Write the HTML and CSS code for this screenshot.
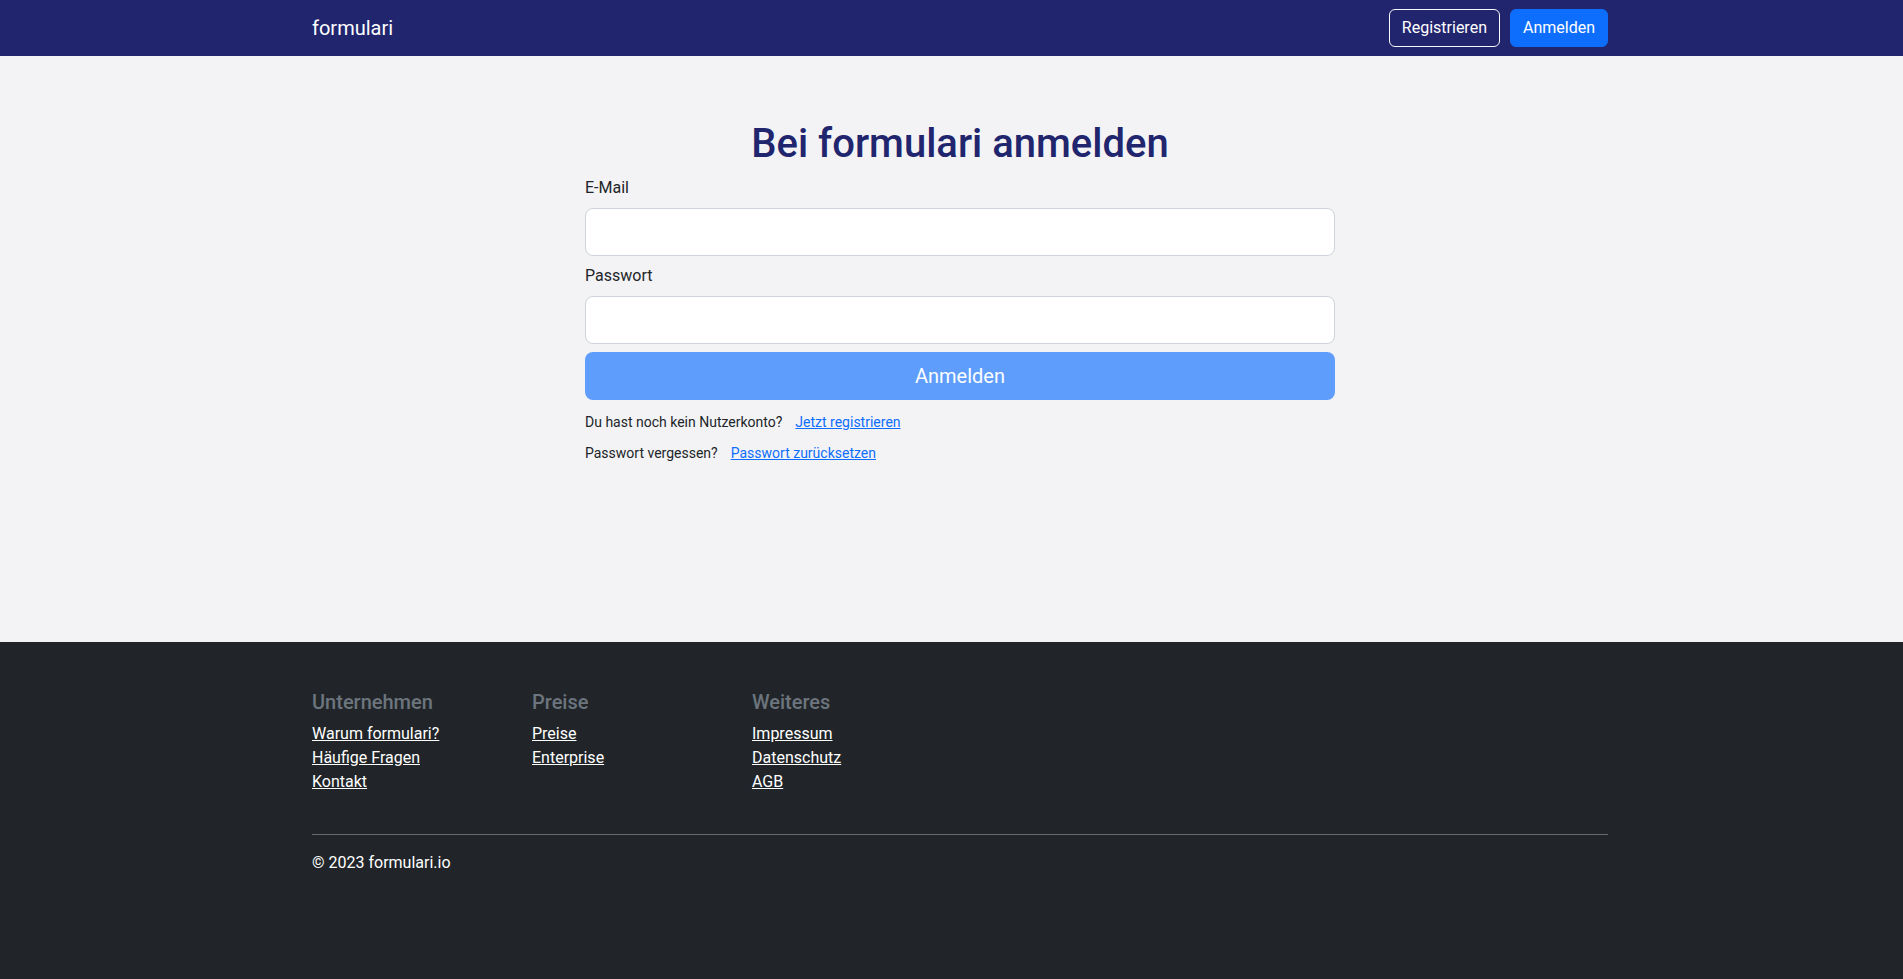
FILE: index.html
```html
<!DOCTYPE html>
<html lang="de">
<head>
<meta charset="utf-8">
<title>Bei formulari anmelden</title>
<link rel="stylesheet" href="styles.css">
</head>
<body>
<div class="page">
  <header class="navbar">
    <div class="container nav-inner">
      <a class="brand" href="#">formulari</a>
      <div class="nav-actions">
        <a class="btn btn-outline" href="#">Registrieren</a>
        <a class="btn btn-primary" href="#">Anmelden</a>
      </div>
    </div>
  </header>

  <main class="main">
    <div class="container">
      <div class="login">
        <h1 class="login-title">Bei formulari anmelden</h1>
        <form class="login-form">
          <label class="form-label" for="email">E-Mail</label>
          <input class="form-input" id="email" type="email">
          <label class="form-label" for="password">Passwort</label>
          <input class="form-input" id="password" type="password">
          <button class="submit-btn" type="button">Anmelden</button>
          <div class="hint"><span>Du hast noch kein Nutzerkonto?</span><a href="#">Jetzt registrieren</a></div>
          <div class="hint"><span>Passwort vergessen?</span><a href="#">Passwort zurücksetzen</a></div>
        </form>
      </div>
    </div>
  </main>

  <footer class="footer">
    <div class="container">
      <div class="footer-cols">
        <div class="footer-col">
          <h5 class="footer-heading">Unternehmen</h5>
          <ul class="footer-links">
            <li><a href="#">Warum formulari?</a></li>
            <li><a href="#">Häufige Fragen</a></li>
            <li><a href="#">Kontakt</a></li>
          </ul>
        </div>
        <div class="footer-col">
          <h5 class="footer-heading">Preise</h5>
          <ul class="footer-links">
            <li><a href="#">Preise</a></li>
            <li><a href="#">Enterprise</a></li>
          </ul>
        </div>
        <div class="footer-col">
          <h5 class="footer-heading">Weiteres</h5>
          <ul class="footer-links">
            <li><a href="#">Impressum</a></li>
            <li><a href="#">Datenschutz</a></li>
            <li><a href="#">AGB</a></li>
          </ul>
        </div>
      </div>
      <hr class="footer-rule">
      <p class="copyright">© 2023 formulari.io</p>
    </div>
  </footer>
</div>
</body>
</html>
```

FILE: styles.css
```css
* {
  box-sizing: border-box;
}

html, body {
  margin: 0;
  padding: 0;
}

body {
  font-family: Roboto, "Liberation Sans", Arial, sans-serif;
  font-size: 16px;
  line-height: 1.5;
  color: #212529;
  background: #212529;
}

.page {
  min-height: 100vh;
  display: flex;
  flex-direction: column;
}

.container {
  width: 100%;
  max-width: 1320px;
  padding: 0 12px;
  margin: 0 auto;
}

/* Navbar */
.navbar {
  background: #21256e;
  height: 56px;
  padding-left: 17px;
  display: flex;
  align-items: center;
}

.nav-inner {
  display: flex;
  justify-content: space-between;
  align-items: center;
}

.brand {
  color: #ffffff;
  text-decoration: none;
  font-size: 20px;
  line-height: 30px;
}

.nav-actions {
  display: flex;
  gap: 10px;
}

.btn {
  display: inline-block;
  padding: 6px 12px;
  font-size: 16px;
  line-height: 24px;
  border: 1px solid transparent;
  border-radius: 6px;
  text-decoration: none;
  color: #ffffff;
}

.btn-outline {
  border-color: #f8f9fa;
}

.btn-primary {
  background: #0d6efd;
  border-color: #0d6efd;
}

/* Main */
.main {
  background: #f3f3f5;
  padding-left: 17px;
  padding-top: 64px;
  height: 586px;
  flex-shrink: 0;
}

.login {
  width: 750px;
  margin: 0 auto;
}

.login-title {
  margin: 0 0 8px;
  font-size: 40px;
  line-height: 48px;
  font-weight: 500;
  color: #21256e;
  text-align: center;
}

.login-form {
  margin: 0;
}

.form-label {
  display: block;
  font-size: 16px;
  line-height: 24px;
  margin-bottom: 8px;
  color: #212529;
}

.form-input {
  display: block;
  width: 100%;
  height: 48px;
  margin: 0 0 8px;
  padding: 8px 16px;
  font-family: inherit;
  font-size: 20px;
  background: #ffffff;
  border: 1px solid #ced4da;
  border-radius: 8px;
}

.submit-btn {
  display: block;
  width: 100%;
  height: 48px;
  margin: 0 0 12px;
  padding: 0;
  border: none;
  border-radius: 8px;
  background: #5e9dfc;
  color: #fcfdff;
  font-family: inherit;
  font-size: 20px;
  line-height: 30px;
}

.hint {
  display: flex;
  gap: 13px;
  font-size: 14px;
  line-height: 21px;
  margin-bottom: 10px;
  color: #212529;
}

.hint a {
  color: #0d6efd;
  text-decoration: underline;
}

/* Footer */
.footer {
  flex: 1 0 auto;
  background: #212529;
  padding: 48px 0 48px 17px;
  color: #ffffff;
}

.footer-cols {
  display: grid;
  grid-template-columns: 196px 196px 196px;
  column-gap: 24px;
  margin-bottom: 40px;
}

.footer-heading {
  margin: 0 0 8px;
  font-size: 20px;
  line-height: 24px;
  font-weight: 500;
  color: #6c757d;
}

.footer-links {
  list-style: none;
  margin: 0;
  padding: 0;
}

.footer-links li {
  line-height: 24px;
}

.footer-links a {
  color: #ffffff;
  text-decoration: underline;
}

.footer-rule {
  margin: 0 0 16px;
  border: 0;
  border-top: 1px solid #65686c;
  height: 0;
}

.copyright {
  margin: 0;
  line-height: 24px;
  color: #ffffff;
}
```
